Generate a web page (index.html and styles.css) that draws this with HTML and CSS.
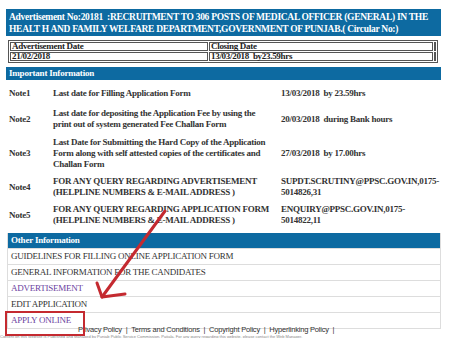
FILE: index.html
```html
<!DOCTYPE html>
<html lang="en">
  <head>
    <meta charset="UTF-8" />
    <title>Advertisement 20181</title>
    <link rel="stylesheet" href="styles.css">
  </head>
  <body>
    <div class="page">
      <div class="panel">
        <div class="title-bar">
          Advertisement No:20181 &nbsp;:RECRUITMENT TO 306 POSTS OF MEDICAL OFFICER (GENERAL) IN THE HEALT H AND FAMILY WELFARE DEPARTMENT,GOVERNMENT OF PUNJAB.( Circular No:)
        </div>

        <table class="dates">
          <tr>
            <td class="c1">Advertisement Date</td>
            <td class="c2">Closing Date</td>
            <td class="c3"></td>
          </tr>
          <tr>
            <td class="c1">21/02/2018</td>
            <td class="c2">13/03/2018 &nbsp;by23.59hrs</td>
            <td class="c3"></td>
          </tr>
        </table>

        <div class="bar">Important Information</div>

        <table class="notes">
          <tr class="n1">
            <td class="lbl">Note1</td>
            <td class="desc">Last date for Filling Application Form</td>
            <td class="val">13/03/2018 &nbsp;by 23.59hrs</td>
          </tr>
          <tr class="n2">
            <td class="lbl">Note2</td>
            <td class="desc">Last date for depositing the Application Fee by using the print out of system generated Fee Challan Form</td>
            <td class="val">20/03/2018 &nbsp;during Bank hours</td>
          </tr>
          <tr class="n3">
            <td class="lbl">Note3</td>
            <td class="desc">Last Date for Submitting the Hard Copy of the Application Form along with self attested copies of the certificates and Challan Form</td>
            <td class="val">27/03/2018 &nbsp;by 17.00hrs</td>
          </tr>
          <tr class="n4">
            <td class="lbl">Note4</td>
            <td class="desc">FOR ANY QUERY REGARDING ADVERTISEMENT (HELPLINE NUMBERS &amp; E-MAIL ADDRESS )</td>
            <td class="val">SUPDT.SCRUTINY@PPSC.GOV.IN,0175-5014826,31</td>
          </tr>
          <tr class="n5">
            <td class="lbl">Note5</td>
            <td class="desc">FOR ANY QUERY REGARDING APPLICATION FORM (HELPLINE NUMBERS &amp; E-MAIL ADDRESS )</td>
            <td class="val">ENQUIRY@PPSC.GOV.IN,0175-5014822,11</td>
          </tr>
        </table>

        <div class="other">
          <div class="bar other-head">Other Information</div>
          <div class="row">GUIDELINES FOR FILLING ONLINE APPLICATION FORM</div>
          <div class="row">GENERAL INFORMATION FOR THE CANDIDATES</div>
          <div class="row link">ADVERTISEMENT</div>
          <div class="row">EDIT APPLICATION</div>
          <div class="row link"><span class="boxed">APPLY ONLINE</span></div>
        </div>
      </div>

      <div class="footer">
        Privacy Policy &nbsp;| &nbsp;Terms and Conditions &nbsp;| &nbsp;Copyright Policy &nbsp;| &nbsp;Hyperlinking Policy &nbsp;|
      </div>
      <div class="footer-cut">Content on this Website is Published and Managed by Punjab Public Service Commission, Patiala. For any query regarding this website, please contact the Web Manager.</div>

      <svg class="arrow" width="451" height="338" viewBox="0 0 451 338">
        <g stroke="#c42a30" stroke-width="3" stroke-linecap="round" stroke-linejoin="round" fill="none">
          <path d="M165 211 L102 297" />
          <path d="M97 283 L102 297 L125 294" />
        </g>
      </svg>
    </div>
  </body>
</html>
```

FILE: styles.css
```css
* {
  box-sizing: border-box;
}

body {
  margin: 0;
  background: #fff;
  font-family: "Liberation Serif", "Times New Roman", serif;
  color: #222;
}

.page {
  position: relative;
  width: 451px;
  height: 338px;
  overflow: hidden;
  padding-top: 9px;
}

.panel {
  margin-left: 6px;
  width: 435px;
}

.title-bar {
  background: #0d6aa1;
  color: #fff;
  font-weight: bold;
  font-size: 9.5px;
  letter-spacing: -0.3px;
  line-height: 12px;
  padding: 2px 3px 1px 3px;
  height: 27px;
}

.dates {
  margin: 4px 0 0 2px;
  width: 430px;
  border: 1px solid #555;
  border-collapse: separate;
  border-spacing: 1px;
  font-size: 9px;
  letter-spacing: -0.3px;
  font-weight: bold;
}

.dates td {
  border: 1px solid #555;
  padding: 0 1px;
  line-height: 7px;
}

.dates .c1 {
  width: 198px;
}

.dates .c3 {
  width: 2px;
  padding: 0;
}

.bar {
  background: #0d6aa1;
  color: #fff;
  font-weight: bold;
  font-size: 9px;
  letter-spacing: -0.2px;
  line-height: 13px;
  padding: 0 3px;
  margin-top: 4px;
}

.notes {
  width: 440px;
  border-collapse: collapse;
  font-size: 9px;
  letter-spacing: -0.25px;
  font-weight: bold;
  color: #333;
  line-height: 11px;
  margin-top: 5px;
}

.notes td {
  padding: 0;
  vertical-align: middle;
}

.notes .lbl {
  width: 47px;
  padding-left: 3px;
}

.notes .desc {
  width: 228px;
  padding-right: 6px;
}

.notes .val {
  padding-right: 6px;
}

.notes .n1 td {
  height: 16px;
}

.notes .n2 td {
  height: 36px;
}

.notes .n3 td {
  height: 33px;
}

.notes .n4 td {
  height: 34px;
}

.notes .n5 td {
  height: 21px;
}

.other {
  margin: 7px 0 0 1px;
  width: 434px;
  border: 1px solid #ddd;
  border-top: none;
}

.other-head {
  margin-top: 0;
  line-height: 15px;
}

.row {
  font-size: 9px;
  letter-spacing: -0.25px;
  line-height: 15px;
  padding: 0 3px;
  border-top: 1px solid #ddd;
  color: #333;
  text-transform: uppercase;
}

.row.link {
  color: #6b3fa0;
}

.boxed {
  position: relative;
}

/* red highlight drawn over the row */
.boxed::after {
  content: "";
  position: absolute;
  left: -6px;
  top: -4px;
  width: 76px;
  height: 21px;
  border: 2px solid #c42a30;
}

.footer {
  margin-top: -3px;
  padding-left: 78px;
  font-family: "Liberation Sans", Arial, sans-serif;
  font-size: 7.5px;
  letter-spacing: -0.2px;
  color: #333;
  line-height: 8px;
  white-space: nowrap;
}

.footer-cut {
  font-family: "Liberation Sans", Arial, sans-serif;
  font-size: 4px;
  color: #888;
  white-space: nowrap;
  line-height: 5px;
  overflow: hidden;
}

.arrow {
  position: absolute;
  left: 0;
  top: 0;
}
```
